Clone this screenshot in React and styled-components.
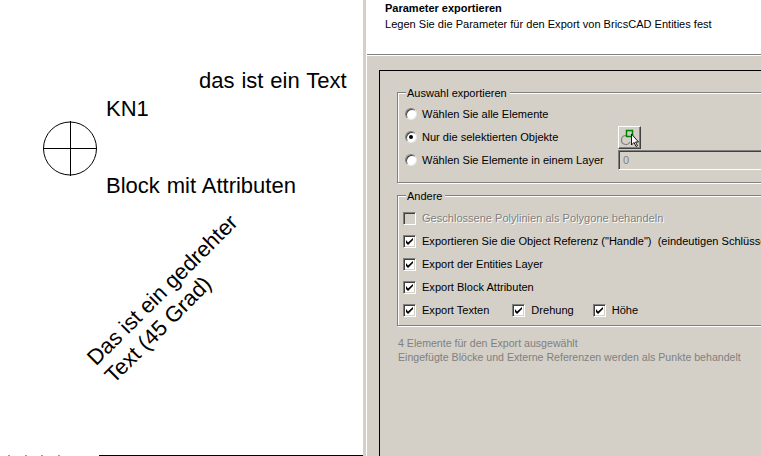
import styled, { createGlobalStyle } from "styled-components";

const GlobalStyle = createGlobalStyle`
  html, body {
    margin: 0;
    padding: 0;
    background: #fff;
  }
`;

const Screen = styled.div`
  width: 761px;
  height: 456px;
  display: flex;
  overflow: hidden;
  font-family: "Liberation Sans", Arial, sans-serif;
`;

const Canvas = styled.div`
  position: relative;
  width: 363px;
  flex: none;
  height: 100%;
  background: #fff;
`;

const CadText = styled.span`
  position: absolute;
  left: ${(p) => p.$x}px;
  top: ${(p) => p.$y}px;
  font-size: 22px;
  line-height: 24px;
  word-spacing: 0.8px;
  color: #000;
  white-space: nowrap;
`;

const RotatedText = styled.div`
  position: absolute;
  left: 100px;
  top: 346px;
  font-size: 21.9px;
  line-height: 24.5px;
  color: #000;
  white-space: nowrap;
  transform: rotate(-45deg);
  transform-origin: 0 50%;
`;

const BlockSymbol = styled.svg`
  position: absolute;
  left: 43px;
  top: 121px;
`;

const CutOffLine = styled.div`
  position: absolute;
  left: 99px;
  right: 0;
  bottom: 0;
  height: 1px;
  background: #000;
`;

const CutOffDot = styled.i`
  position: absolute;
  left: ${(p) => p.$x}px;
  bottom: 0;
  width: 2px;
  height: 1px;
  background: #999;
`;

const Splitter = styled.div`
  width: 3px;
  flex: none;
  background: #d4d0c8;
  border-right: 1px solid #fff;
`;

const Dialog = styled.div`
  flex: 1;
  min-width: 0;
  background: #d4d0c8;
  display: flex;
  flex-direction: column;
`;

const Header = styled.div`
  height: 55px;
  flex: none;
  background: #fff;
  border-bottom: 1px solid #808080;
  box-shadow: 0 1px 0 #fff;
  padding: 1px 0 0 18px;
  box-sizing: border-box;
  font-size: 11px;
  line-height: 14px;
  color: #000;
`;

const HeaderTitle = styled.div`
  font-weight: bold;
  height: 16px;
`;

const HeaderText = styled.div`
  color: #000;
  font-size: 11.05px;
`;

const Frame = styled.div`
  margin: 15px 0 0 12px;
  flex: 1;
  width: 520px;
  border: solid #000;
  border-width: 1px 0 0 1px;
  padding: 15px 0 0 17px;
`;

const Group = styled.fieldset`
  margin: 0 0 6px;
  padding: 0 0 0 ${(p) => p.$inset}px;
  width: 500px;
  height: ${(p) => p.$height}px;
  box-sizing: border-box;
  border: 1px solid #808080;
  box-shadow: 1px 1px 0 #fff, inset 1px 1px 0 #fff;
  min-width: 0;
`;

const GroupTitle = styled.legend`
  margin-left: ${(p) => p.$offset}px;
  padding: 0 3px 0 1px;
  font-size: 11px;
  line-height: 13px;
  color: #000;
  background: #d4d0c8;
  transform: translateY(1px);
`;

const Rows = styled.div`
  display: flex;
  flex-direction: column;
  padding-top: ${(p) => p.$top}px;
  gap: ${(p) => p.$gap}px;
`;

const Row = styled.div`
  display: flex;
  align-items: center;
  height: 14px;
  font-size: 11.05px;
  color: ${(p) => (p.$disabled ? "#808080" : "#000")};
  text-shadow: ${(p) => (p.$disabled ? "1px 1px 0 #fff" : "none")};
  white-space: nowrap;
`;

const Radio = styled.span`
  width: 12px;
  height: 12px;
  flex: none;
  margin-right: 5px;
  border-radius: 50%;
  background: #fff;
  box-sizing: border-box;
  border: 1px solid;
  border-color: #808080 #e8e6e0 #e8e6e0 #808080;
  box-shadow: inset 1px 1px 0 #404040;
  display: flex;
  align-items: center;
  justify-content: center;

  &::after {
    content: "";
    width: 4px;
    height: 4px;
    border-radius: 50%;
    background: ${(p) => (p.$checked ? "#000" : "transparent")};
  }
`;

const RadioLabel = styled.span`
  width: ${(p) => p.$width || "auto"};
  flex: none;
`;

const CheckBox = styled.span`
  width: 13px;
  height: 13px;
  flex: none;
  margin-right: 6px;
  box-sizing: border-box;
  background: ${(p) => (p.$disabled ? "#d4d0c8" : "#fff")};
  border: 1px solid;
  border-color: #808080 #fff #fff #808080;
  box-shadow: inset 1px 1px 0 #404040, inset -1px -1px 0 #d4d0c8;
  display: flex;
  align-items: center;
  justify-content: center;
`;

const CheckLabel = styled.span`
  margin-right: ${(p) => p.$gap || 0}px;
`;

const PickButton = styled.button`
  width: 23px;
  height: 23px;
  padding: 0;
  flex: none;
  background: #d4d0c8;
  border: 1px solid;
  border-color: #fff #404040 #404040 #fff;
  box-shadow: inset -1px -1px 0 #808080;
  display: flex;
  align-items: center;
  justify-content: center;
`;

const LayerInput = styled.div`
  width: 200px;
  height: 20px;
  flex: none;
  box-sizing: border-box;
  border: 1px solid;
  border-color: #808080 #fff #fff #808080;
  box-shadow: inset 1px 1px 0 #404040;
  padding: 3px 0 0 4px;
  font-size: 11px;
  line-height: 13px;
  color: #808080;
`;

const Note = styled.div`
  margin: 10px 0 0 1px;
  font-size: 10.6px;
  line-height: 14px;
  color: #808080;
  white-space: nowrap;
`;

const Check = ({ disabled }) => (
  <CheckBox $disabled={disabled}>
    {!disabled && (
      <svg width="9" height="9" viewBox="0 0 9 9">
        <path d="M1 3v3l2 2 5-5V1L3 5.5z" fill="#000" />
      </svg>
    )}
  </CheckBox>
);

const PickIcon = () => (
  <svg width="21" height="21" viewBox="0 0 21 21">
    <path d="M7 8.5a4.5 4.5 0 1 0 4 6.5" fill="none" stroke="#808080" strokeWidth="1.2" />
    <rect x="7.5" y="3.5" width="6" height="6" fill="#c4d4b4" stroke="#008000" strokeWidth="1.5" />
    <path d="M12.5 7v11l2.5-2.5 2 4 1.5-.8-2-3.7h3z" fill="#fff" stroke="#000" strokeWidth=".9" />
  </svg>
);

export default function App() {
  return (
    <>
      <GlobalStyle />
      <Screen>
        <Canvas>
          <CadText $x={199} $y={69}>das ist ein Text</CadText>
          <CadText $x={106} $y={97}>KN1</CadText>
          <CadText $x={106} $y={174}>Block mit Attributen</CadText>
          <BlockSymbol width="55" height="56" viewBox="0 0 55 56">
            <circle cx="27" cy="27.5" r="26.5" fill="none" stroke="#000" />
            <path d="M0 27.5H54M27.5 0V55" stroke="#000" />
          </BlockSymbol>
          <RotatedText>
            Das ist ein gedrehter
            <br />
            Text (45 Grad)
          </RotatedText>
          {[8, 25, 41, 58].map((x) => (
            <CutOffDot key={x} $x={x} />
          ))}
          <CutOffLine />
        </Canvas>
        <Splitter />
        <Dialog>
          <Header>
            <HeaderTitle>Parameter exportieren</HeaderTitle>
            <HeaderText>Legen Sie die Parameter für den Export von BricsCAD Entities fest</HeaderText>
          </Header>
          <Frame>
            <Group $height={97} $inset={7}>
              <GroupTitle $offset={1}>Auswahl exportieren</GroupTitle>
              <Rows $top={8} $gap={9}>
                <Row>
                  <Radio />
                  <RadioLabel>Wählen Sie alle Elemente</RadioLabel>
                </Row>
                <Row>
                  <Radio $checked />
                  <RadioLabel $width="196px">Nur die selektierten Objekte</RadioLabel>
                  <PickButton>
                    <PickIcon />
                  </PickButton>
                </Row>
                <Row>
                  <Radio />
                  <RadioLabel $width="196px">Wählen Sie Elemente in einem Layer</RadioLabel>
                  <LayerInput>0</LayerInput>
                </Row>
              </Rows>
            </Group>
            <Group $height={137} $inset={5}>
              <GroupTitle $offset={3}>Andere</GroupTitle>
              <Rows $top={9} $gap={9}>
                <Row $disabled>
                  <Check disabled />
                  Geschlossene Polylinien als Polygone behandeln
                </Row>
                <Row>
                  <Check />
                  Exportieren Sie die Object Referenz ("Handle")&nbsp; (eindeutigen Schlüssel)
                </Row>
                <Row>
                  <Check />
                  Export der Entities Layer
                </Row>
                <Row>
                  <Check />
                  Export Block Attributen
                </Row>
                <Row>
                  <Check />
                  <CheckLabel $gap={23}>Export Texten</CheckLabel>
                  <Check />
                  <CheckLabel $gap={19}>Drehung</CheckLabel>
                  <Check />
                  <CheckLabel>Höhe</CheckLabel>
                </Row>
              </Rows>
            </Group>
            <Note>
              4 Elemente für den Export ausgewählt
              <br />
              Eingefügte Blöcke und Externe Referenzen werden als Punkte behandelt
            </Note>
          </Frame>
        </Dialog>
      </Screen>
    </>
  );
}
